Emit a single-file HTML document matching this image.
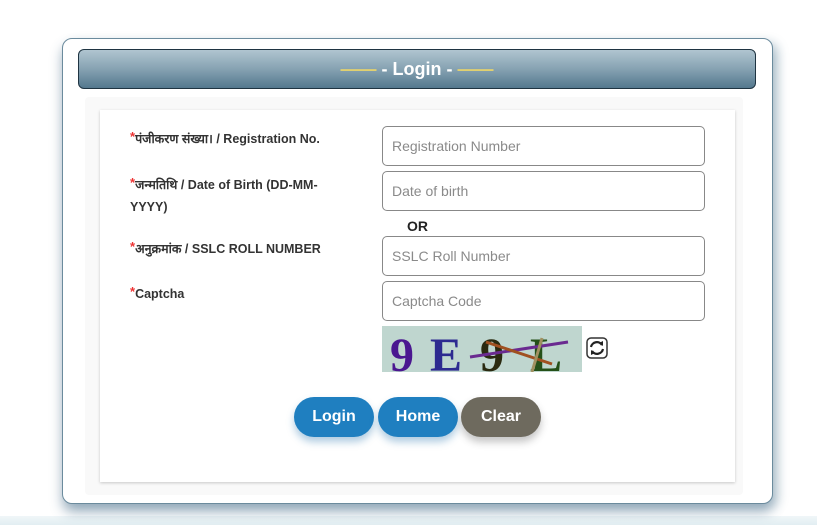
<!DOCTYPE html><html><head><style>
body{margin:0;width:817px;height:525px;background:#fff;font-family:"Liberation Sans","Noto Sans CJK SC",sans-serif;position:relative;overflow:hidden}
.strip{position:absolute;left:0;top:516px;width:817px;height:9px;background:linear-gradient(#f0f6f8,#e2eef2)}
.outer{position:absolute;left:62px;top:38px;width:709px;height:464px;border:1px solid #6b8b9d;border-radius:10px;background:#fff;box-shadow:0 8px 12px rgba(60,100,130,.45),6px 4px 10px rgba(90,130,150,.25)}
.hdr{position:absolute;left:78px;top:49px;width:676px;height:38px;border:1px solid #1f3442;border-radius:6px;background:linear-gradient(#b0c5d0,#86a2b2 50%,#54788e);color:#fff;font-weight:bold;font-size:18px;text-align:center;line-height:38px}
.hdr span{color:#e0d070}
.inner{position:absolute;left:85px;top:97px;width:658px;height:398px;background:#f9f9f9;border-radius:4px}
.card{position:absolute;left:100px;top:110px;width:635px;height:372px;background:#fff;box-shadow:0 1px 3px rgba(0,0,0,.2)}
.lbl{position:absolute;left:130px;font-size:12.5px;font-weight:bold;color:#333;line-height:22px;width:215px}
.lbl i{color:#e33;font-style:normal;vertical-align:2px;font-size:13px}
.inp{position:absolute;left:382px;border:1px solid #888;border-radius:5px;color:#8a8a8a;font-size:14px;line-height:38px;padding-left:9px;box-sizing:border-box;width:323px;height:40px}
.btn{position:absolute;top:397px;height:40px;border-radius:20px;color:#fff;font-weight:bold;font-size:16px;line-height:40px;text-align:center;box-shadow:0 5px 8px rgba(30,110,170,.35)}
</style></head><body>
<div class="strip"></div>
<div class="outer"></div>
<div class="hdr"><span>——</span> - Login - <span>——</span></div>
<div class="inner"></div>
<div class="card"></div>
<div class="lbl" style="top:126px"><i>*</i>पंजीकरण संख्या। / Registration No.</div>
<div class="lbl" style="top:172px"><i>*</i>जन्मतिथि / Date of Birth (DD-MM-YYYY)</div>
<div class="lbl" style="top:236px"><i>*</i>अनुक्रमांक / SSLC ROLL NUMBER</div>
<div class="lbl" style="top:281px"><i>*</i>Captcha</div>
<div class="inp" style="top:126px">Registration Number</div>
<div class="inp" style="top:171px">Date of birth</div>
<div style="position:absolute;left:407px;top:218px;font-weight:bold;font-size:14px;color:#222">OR</div>
<div class="inp" style="top:236px">SSLC Roll Number</div>
<div class="inp" style="top:281px">Captcha Code</div>
<div style="position:absolute;left:382px;top:326px;width:200px;height:46px;background:#bfd6cf;overflow:hidden;font-family:'Liberation Serif',serif;font-weight:bold;font-size:48px;line-height:60px">
<span style="position:absolute;left:8px;color:#4a1790">9</span>
<span style="position:absolute;left:48px;color:#2d2a90">E</span>
<span style="position:absolute;left:98px;color:#2a2a10">9</span>
<span style="position:absolute;left:148px;color:#245018">L</span>
<svg width="200" height="46" style="position:absolute;left:0;top:0"><line x1="88" y1="31" x2="186" y2="16" stroke="#6a2a90" stroke-width="3"/><line x1="104" y1="16" x2="170" y2="38" stroke="#a05020" stroke-width="3"/><line x1="160" y1="12" x2="150" y2="46" stroke="#a09060" stroke-width="3"/></svg>
</div>
<svg width="22" height="22" style="position:absolute;left:586px;top:337px"><rect x="1" y="1" width="20" height="20" rx="4" fill="#fff" stroke="#333" stroke-width="1.5"/><path d="M5 10a6 6 0 0 1 11-2M17 12a6 6 0 0 1-11 2" fill="none" stroke="#222" stroke-width="2.2"/><path d="M13 6l4 3 0-5zM9 16l-4-3 0 5z" fill="#222"/></svg>
<div class="btn" style="left:294px;width:80px;background:#1f7fc0">Login</div>
<div class="btn" style="left:378px;width:80px;background:#1f7fc0">Home</div>
<div class="btn" style="left:461px;width:80px;background:#6e6a5e;box-shadow:0 5px 8px rgba(60,60,60,.3)">Clear</div>
</body></html>
